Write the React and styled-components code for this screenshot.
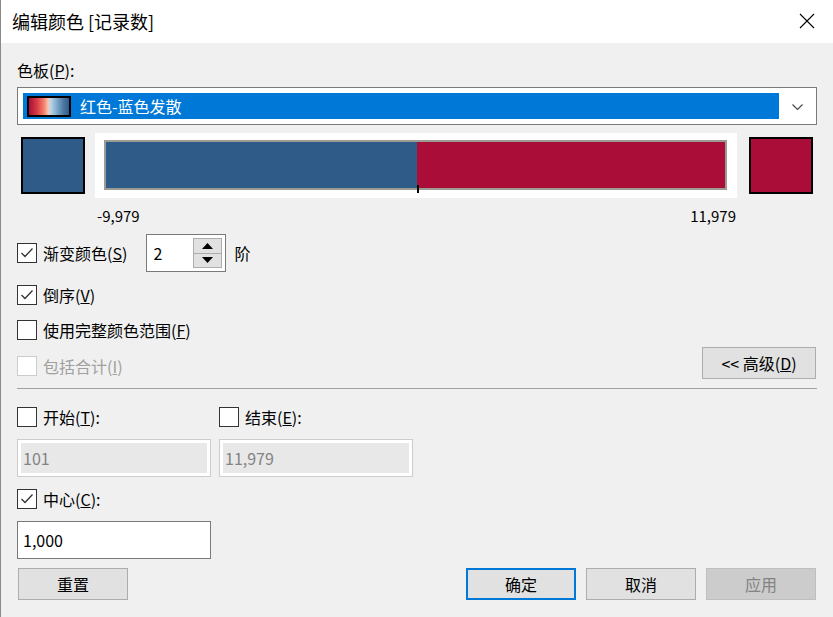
import React from 'react'
import styled, { createGlobalStyle } from 'styled-components'

const GlobalStyle = createGlobalStyle`
  html, body {
    margin: 0;
    padding: 0;
    background: #f0f0f0;
  }
  * {
    box-sizing: border-box;
  }
  body {
    font-family: "Noto Sans CJK SC", "Noto Sans", sans-serif;
    font-size: 16px;
    color: #000;
  }
`

const Window = styled.div`
  width: 833px;
  height: 617px;
  background: #f0f0f0;
  border-left: 1px solid #8a8a8a;
  overflow: hidden;
`

const TitleBar = styled.div`
  height: 43px;
  background: #fff;
  display: flex;
  align-items: center;
  justify-content: space-between;
  padding: 0 18px 2px 11px;
  font-size: 18px;
`

const CloseButton = styled.div`
  width: 16px;
  height: 16px;
  display: flex;
  align-items: center;
  justify-content: center;
`

const Body = styled.div`
  padding: 0 16px 0 16px;
  display: flex;
  flex-direction: column;
`

const Label = styled.div`
  height: 20px;
  line-height: 20px;
  margin-top: ${({ mt }) => mt || 0}px;
`

const Select = styled.div`
  margin-top: 7px;
  height: 38px;
  width: 800px;
  border: 1px solid #7a7a7a;
  background: #fff;
  padding: 5px 0 0 5px;
  display: flex;
  align-items: flex-start;
`

const Highlight = styled.div`
  width: 756px;
  height: 26px;
  background: #0078d7;
  color: #fff;
  display: flex;
  align-items: center;
  padding-left: 4px;
  gap: 9px;
`

const Swatch = styled.div`
  width: 44px;
  height: 21px;
  border: 2px solid #000;
  background: linear-gradient(
    to right,
    #a50f38,
    #d93a45 20%,
    #f4846c 38%,
    #f9c7b0 48%,
    #b9d6ea 54%,
    #7ea8ca 70%,
    #4e7aa6 85%,
    #2e5b88
  );
`

const Chevron = styled.div`
  flex: 1;
  display: flex;
  justify-content: center;
  padding-top: 11px;
`

const ColorRow = styled.div`
  margin-top: 8px;
  padding-left: 4px;
  display: flex;
  align-items: center;
`

const ColorSquare = styled.div`
  width: 64px;
  height: 57px;
  border: 2px solid #000;
  background: ${({ color }) => color};
`

const BarFrame = styled.div`
  width: 642px;
  height: 65px;
  margin: 0 12px 0 10px;
  background: #fff;
  padding: 7px 10px 8px 9px;
`

const Bar = styled.div`
  position: relative;
  height: 50px;
  border: 2px solid #9c9c94;
  display: flex;
`

const BarPart = styled.div`
  flex: ${({ grow }) => grow};
  background: ${({ color }) => color};
`

const Tick = styled.div`
  position: absolute;
  left: 311px;
  bottom: -5px;
  width: 2px;
  height: 8px;
  background: #000;
`

const RangeLabels = styled.div`
  margin: 8px 81px 0 80px;
  height: 20px;
  line-height: 20px;
  display: flex;
  justify-content: space-between;
  font-size: 15px;
`

const Row = styled.div`
  display: flex;
  align-items: ${({ align }) => align || 'center'};
  justify-content: ${({ justify }) => justify || 'flex-start'};
  margin-top: ${({ mt }) => mt || 0}px;
`

const CheckItem = styled.label`
  display: flex;
  align-items: center;
  height: 24px;
  gap: 6px;
  color: ${({ disabled }) => (disabled ? '#a0a0a0' : '#000')};
  margin-bottom: ${({ mb }) => mb || 0}px;
`

const Box = styled.span`
  width: 20px;
  height: 20px;
  border: 1px solid ${({ disabled }) => (disabled ? '#cccccc' : '#333333')};
  background: #fff;
  display: flex;
  align-items: center;
  justify-content: center;
`

const Spinner = styled.div`
  margin-left: 19px;
  width: 80px;
  height: 38px;
  border: 1px solid #7a7a7a;
  background: #fff;
  display: flex;
  align-items: center;
  justify-content: space-between;
  padding: 2px 3px 2px 6px;
`

const SpinButtons = styled.div`
  width: 29px;
  height: 30px;
  display: flex;
  flex-direction: column;
`

const SpinButton = styled.div`
  flex: 1;
  background: #e1e1e1;
  border: 1px solid #adadad;
  margin-top: ${({ mt }) => mt || 0}px;
  display: flex;
  align-items: center;
  justify-content: center;
`

const Unit = styled.span`
  margin-left: 8px;
`

const Button = styled.button`
  width: 110px;
  height: 32px;
  font-family: inherit;
  font-size: 16px;
  background: ${({ disabled }) => (disabled ? '#cccccc' : '#e1e1e1')};
  color: ${({ disabled }) => (disabled ? '#838383' : '#000')};
  border: ${({ primary, disabled }) =>
    primary ? '2px solid #0078d7' : disabled ? '1px solid #bfbfbf' : '1px solid #adadad'};
  padding: 0;
  margin-left: ${({ ml }) => ml || 0}px;
  cursor: default;
`

const AdvancedButton = styled(Button)`
  width: 114px;
  margin-right: 1px;
`

const Separator = styled.div`
  margin-top: 9px;
  height: 1px;
  width: 800px;
  background: #a0a0a0;
`

const Columns = styled.div`
  display: grid;
  grid-template-columns: 194px 194px;
  column-gap: 8px;
  margin-top: ${({ mt }) => mt || 0}px;
`

const Field = styled.div`
  height: 38px;
  width: 194px;
  border: 1px solid ${({ disabled }) => (disabled ? '#cccccc' : '#7a7a7a')};
  background: #fff;
  padding: 3px;
`

const FieldInner = styled.div`
  height: 100%;
  background: ${({ disabled }) => (disabled ? '#e8e8e8' : '#fff')};
  color: ${({ disabled }) => (disabled ? '#838383' : '#000')};
  display: flex;
  align-items: center;
  padding-left: 2px;
`

const Footer = styled.div`
  margin-top: 9px;
  padding: 0 1px 0 1px;
  display: flex;
  align-items: center;
`

const Spacer = styled.div`
  flex: 1;
`

const Check = () => (
  <svg width="14" height="12" viewBox="0 0 14 12">
    <polyline points="1.5,6 5,9.5 12.5,1.5" fill="none" stroke="#333" strokeWidth="1.3" />
  </svg>
)

const CheckBox = ({ checked, disabled, children, mb }) => (
  <CheckItem disabled={disabled} mb={mb}>
    <Box disabled={disabled}>{checked && <Check />}</Box>
    <span>{children}</span>
  </CheckItem>
)

const App = () => (
  <>
    <GlobalStyle />
    <Window>
      <TitleBar>
        <span>编辑颜色 [记录数]</span>
        <CloseButton>
          <svg width="16" height="16" viewBox="0 0 16 16">
            <path d="M1 1 L15 15 M15 1 L1 15" stroke="#000" strokeWidth="1.1" />
          </svg>
        </CloseButton>
      </TitleBar>
      <Body>
        <Label mt={17}>
          色板(<u>P</u>):
        </Label>
        <Select>
          <Highlight>
            <Swatch />
            <span>红色-蓝色发散</span>
          </Highlight>
          <Chevron>
            <svg width="11" height="6" viewBox="0 0 11 6">
              <polyline points="0.5,0.5 5.5,5.5 10.5,0.5" fill="none" stroke="#444" strokeWidth="1.1" />
            </svg>
          </Chevron>
        </Select>

        <ColorRow>
          <ColorSquare color="#2e5b88" />
          <BarFrame>
            <Bar>
              <BarPart grow={311} color="#2e5b88" />
              <BarPart grow={308} color="#a90d38" />
              <Tick />
            </Bar>
          </BarFrame>
          <ColorSquare color="#a90d38" />
        </ColorRow>

        <RangeLabels>
          <span>-9,979</span>
          <span>11,979</span>
        </RangeLabels>

        <Row mt={8}>
          <CheckBox checked>
            渐变颜色(<u>S</u>)
          </CheckBox>
          <Spinner>
            <span>2</span>
            <SpinButtons>
              <SpinButton>
                <svg width="11" height="6" viewBox="0 0 11 6">
                  <polygon points="0,6 5.5,0 11,6" fill="#000" />
                </svg>
              </SpinButton>
              <SpinButton mt={-1}>
                <svg width="11" height="6" viewBox="0 0 11 6">
                  <polygon points="0,0 5.5,6 11,0" fill="#000" />
                </svg>
              </SpinButton>
            </SpinButtons>
          </Spinner>
          <Unit>阶</Unit>
        </Row>

        <Row mt={11}>
          <CheckBox checked>
            倒序(<u>V</u>)
          </CheckBox>
        </Row>

        <Row mt={11}>
          <CheckBox>
            使用完整颜色范围(<u>F</u>)
          </CheckBox>
        </Row>

        <Row mt={5} align="flex-end" justify="space-between">
          <CheckBox disabled mb={1}>
            包括合计(<u>I</u>)
          </CheckBox>
          <AdvancedButton>
            {'<< 高级('}
            <u>D</u>)
          </AdvancedButton>
        </Row>

        <Separator />

        <Columns mt={16}>
          <CheckBox>
            开始(<u>T</u>):
          </CheckBox>
          <CheckBox>
            结束(<u>E</u>):
          </CheckBox>
        </Columns>

        <Columns mt={10}>
          <Field disabled>
            <FieldInner disabled>101</FieldInner>
          </Field>
          <Field disabled>
            <FieldInner disabled>11,979</FieldInner>
          </Field>
        </Columns>

        <Row mt={10}>
          <CheckBox checked>
            中心(<u>C</u>):
          </CheckBox>
        </Row>

        <Columns mt={10}>
          <Field>
            <FieldInner>1,000</FieldInner>
          </Field>
        </Columns>

        <Footer>
          <Button>重置</Button>
          <Spacer />
          <Button primary>确定</Button>
          <Button ml={10}>取消</Button>
          <Button ml={10} disabled>
            应用
          </Button>
        </Footer>
      </Body>
    </Window>
  </>
)

export default App
